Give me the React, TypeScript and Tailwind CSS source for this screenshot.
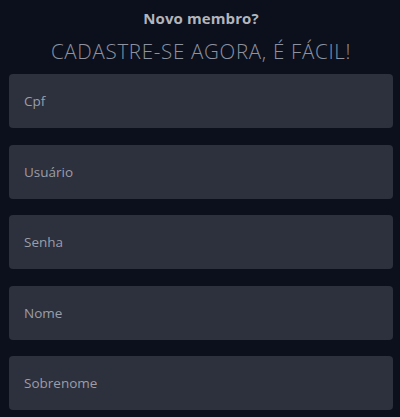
import React from 'react';

const fields = ['Cpf', 'Usuário', 'Senha', 'Nome', 'Sobrenome'];

function App() {
  return (
    <div className="min-h-screen bg-[#0b101c] font-['Open_Sans',sans-serif]">
      <div className="pl-[9px] pr-[7px] pt-[8px] pb-[8px]">
        <div className="text-center">
          <h2 className="text-[15px] font-bold text-[#b3b5bc] leading-[20px] tracking-[0.1px]">Novo membro?</h2>
          <h1 className="mt-[10px] text-[20.5px] font-light text-[#8d92a0] leading-[26px] tracking-[0.7px]">
            CADASTRE-SE AGORA, É FÁCIL!
          </h1>
        </div>

        <form className="mt-[10px] flex flex-col gap-[16.5px]">
          {fields.map(f => (
            <input
              key={f}
              type={f === 'Senha' ? 'password' : 'text'}
              placeholder={f}
              className="h-[54px] w-full rounded-[4px] bg-[#2d303d] px-[15px] text-[13.5px] text-[#c4c6cc] placeholder:text-[#9b9ea8] outline-none"
            />
          ))}
        </form>
      </div>
    </div>
  );
}

export default App;
